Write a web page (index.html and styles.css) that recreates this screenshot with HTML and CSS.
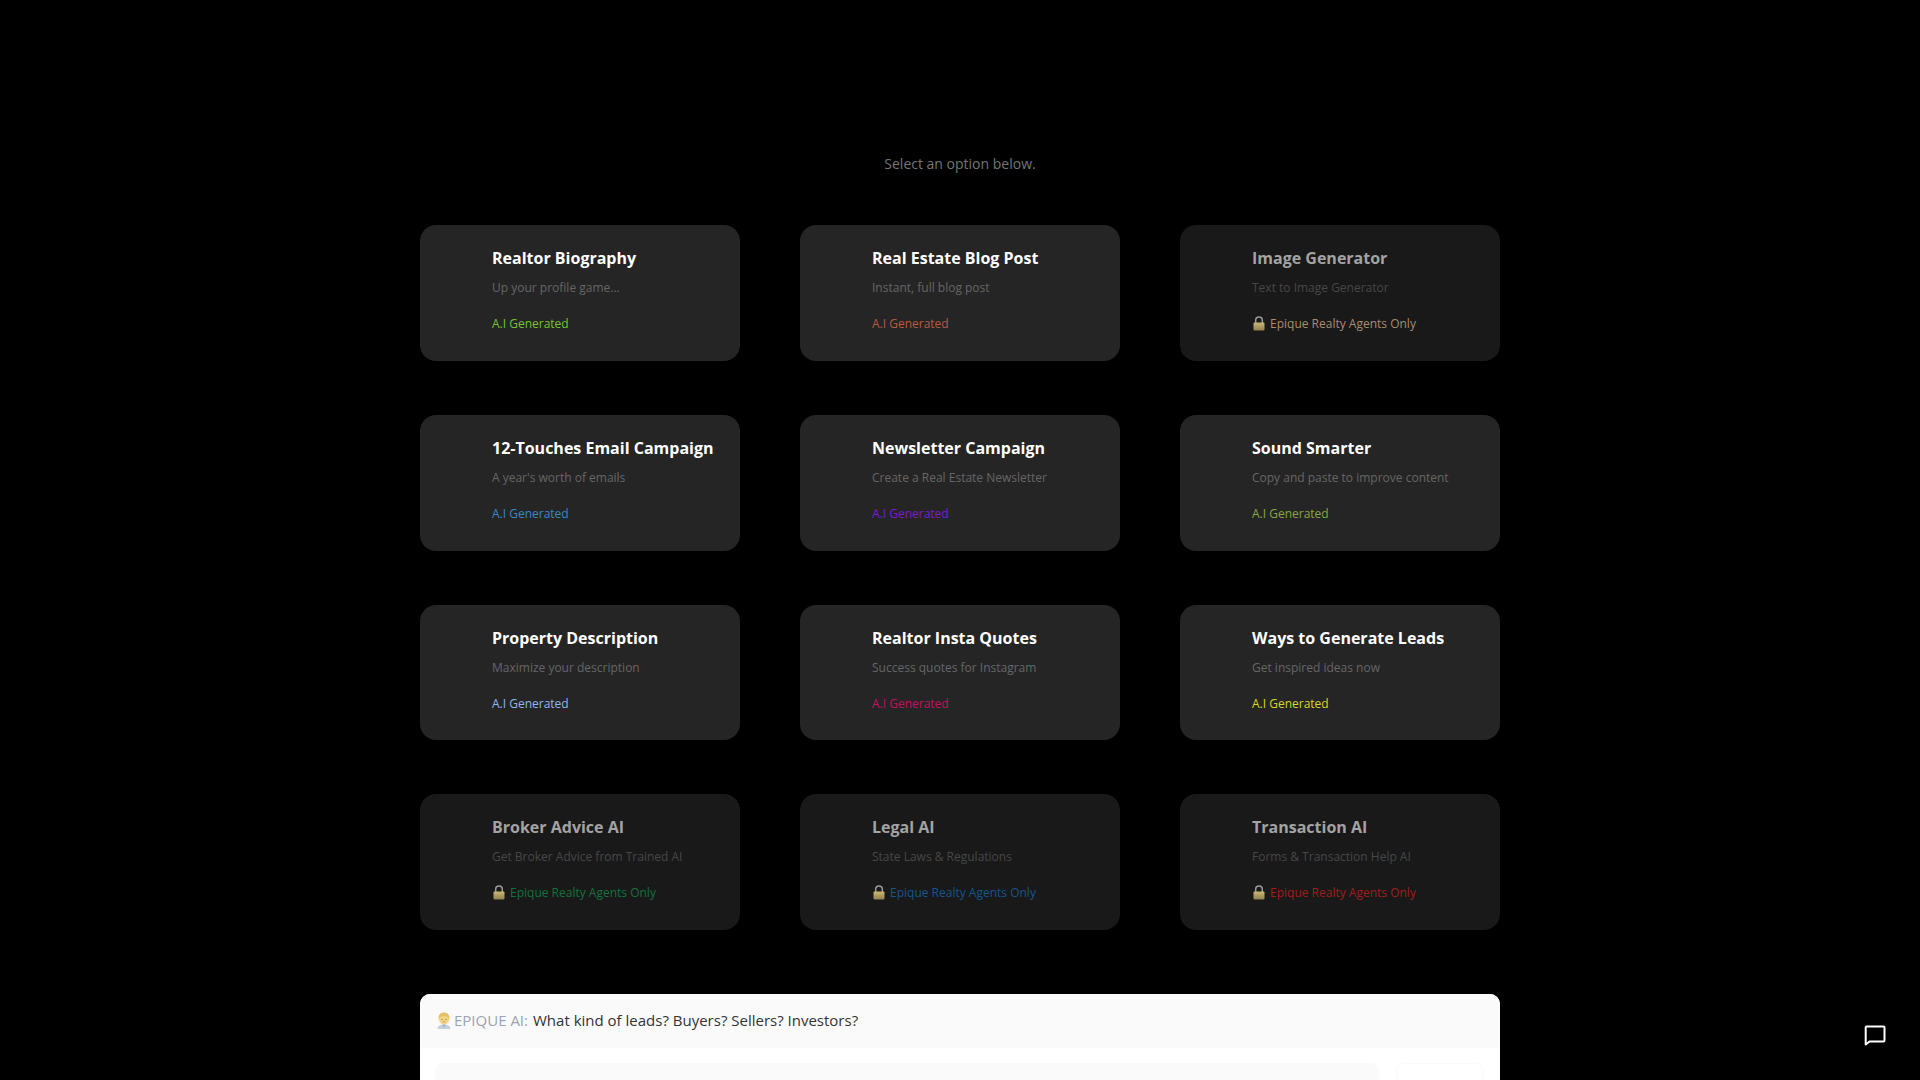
FILE: index.html
```html
<!DOCTYPE html>
<html lang="en">
<head>
<meta charset="utf-8">
<title>Epique AI</title>
<link rel="stylesheet" href="styles.css">
</head>
<body>
<svg class="defs" width="0" height="0" aria-hidden="true">
  <defs>
    <linearGradient id="lockBody" x1="0" y1="0" x2="0" y2="1"><stop offset="0" stop-color="#cdb873"/><stop offset="1" stop-color="#8f8150"/></linearGradient>
    <symbol id="lock" viewBox="0 0 12 15">
      <path d="M2.700 7V4.300a3.300 3.300 0 0 1 6.600 0V7" fill="none" stroke="#9a9a9a" stroke-width="1.500"/>
      <rect x="0.500" y="6.500" width="11" height="8" rx="1" fill="url(#lockBody)"/>
    </symbol>
  </defs>
</svg>
<main class="page">
  <p class="intro">Select an option below.</p>
  <section class="grid">
    <article class="card"><h2>Realtor Biography</h2><p class="desc">Up your profile game...</p><p class="tag c-green">A.I Generated</p></article>
    <article class="card"><h2>Real Estate Blog Post</h2><p class="desc">Instant, full blog post</p><p class="tag c-red">A.I Generated</p></article>
    <article class="card locked"><h2>Image Generator</h2><p class="desc">Text to Image Generator</p><p class="tag c-tan"><svg class="lock"><use href="#lock"/></svg>Epique Realty Agents Only</p></article>
    <article class="card"><h2>12-Touches Email Campaign</h2><p class="desc">A year's worth of emails</p><p class="tag c-blue">A.I Generated</p></article>
    <article class="card"><h2>Newsletter Campaign</h2><p class="desc">Create a Real Estate Newsletter</p><p class="tag c-purple">A.I Generated</p></article>
    <article class="card"><h2>Sound Smarter</h2><p class="desc">Copy and paste to improve content</p><p class="tag c-olive">A.I Generated</p></article>
    <article class="card"><h2>Property Description</h2><p class="desc">Maximize your description</p><p class="tag c-sky">A.I Generated</p></article>
    <article class="card"><h2>Realtor Insta Quotes</h2><p class="desc">Success quotes for Instagram</p><p class="tag c-pink">A.I Generated</p></article>
    <article class="card"><h2>Ways to Generate Leads</h2><p class="desc">Get inspired ideas now</p><p class="tag c-yellow">A.I Generated</p></article>
    <article class="card locked"><h2>Broker Advice AI</h2><p class="desc">Get Broker Advice from Trained AI</p><p class="tag c-dgreen"><svg class="lock"><use href="#lock"/></svg>Epique Realty Agents Only</p></article>
    <article class="card locked"><h2>Legal AI</h2><p class="desc">State Laws &amp; Regulations</p><p class="tag c-dblue"><svg class="lock"><use href="#lock"/></svg>Epique Realty Agents Only</p></article>
    <article class="card locked"><h2>Transaction AI</h2><p class="desc">Forms &amp; Transaction Help AI</p><p class="tag c-dred"><svg class="lock"><use href="#lock"/></svg>Epique Realty Agents Only</p></article>
  </section>
  <section class="panel">
    <header class="panel-head">
      <svg class="avatar" viewBox="0 0 14 17" aria-hidden="true">
        <path d="M0.500 17c0-3 2.500-4.500 6.500-4.500s6.500 1.500 6.500 4.500z" fill="#c4d0dc"/>
        <path d="M5.800 12.500h2.400L7 15.500z" fill="#8fa3b8"/>
        <circle cx="7" cy="7" r="5.400" fill="#f2d587"/>
        <path d="M1.500 7c-.5-4 2-6.500 5.500-6.500S13 3 12.500 7c-.8-1.600-2.500-2.700-5.500-2.700S2.300 5.400 1.500 7z" fill="#e6c069"/>
        <circle cx="5" cy="7.300" r=".6" fill="#8a6d3b"/>
        <circle cx="9" cy="7.300" r=".6" fill="#8a6d3b"/>
        <path d="M5.700 9.800h2.600" stroke="#b98f50" stroke-width=".7" fill="none"/>
      </svg>
      <span class="label">EPIQUE AI:</span>
      <span class="question">What kind of leads? Buyers? Sellers? Investors?</span>
    </header>
    <div class="panel-body">
      <div class="field"></div>
      <div class="send"></div>
    </div>
  </section>
</main>
<svg class="chat" viewBox="0 0 24 24" aria-hidden="true">
  <path d="M3.500 3.500h17a1 1 0 0 1 1 1v13a1 1 0 0 1-1 1H6.500l-3.800 3V4.500a1 1 0 0 1 .8-1z" fill="none" stroke="#fff" stroke-width="2" stroke-linejoin="round"/>
</svg>
</body>
</html>
```

FILE: styles.css
```css
* { box-sizing: border-box; }
html, body { margin: 0; height: 100%; overflow: hidden; background: #000; }
body { font-family: "Open Sans", "Liberation Sans", sans-serif; }
.defs { position: absolute; }
.page { width: 1080px; margin: 0 auto; padding-top: 154px; }
.intro { margin: 0 0 51.3px; height: 20px; font-size: 14px; line-height: 20px; text-align: center; color: #757575; }
.grid { display: grid; grid-template-columns: repeat(3, 320px); column-gap: 60px; row-gap: 54px; }
.card { height: 135.67px; padding: 21px 10px 0 72px; border-radius: 16px; background: #252525; }
.card h2 { margin: 0; font-size: 16px; line-height: 24px; font-weight: 700; color: #fff; white-space: nowrap; }
.desc { margin: 9px 0 0; font-size: 12px; line-height: 18px; color: #666; white-space: nowrap; }
.tag { display: flex; align-items: center; margin: 18px 0 0; font-size: 12px; line-height: 18px; white-space: nowrap; }
.card.locked { background: #191919; }
.card.locked h2 { color: #a3a3a3; }
.card.locked .desc { color: #474747; }
.lock { width: 12px; height: 15px; margin: -1px 5px 0 1px; flex: none; }
.c-green { color: #76c32f; }
.c-red { color: #b85a42; }
.c-tan { color: #a98c6c; }
.c-blue { color: #3a85c9; }
.c-purple { color: #7a1ad1; }
.c-olive { color: #86a83e; }
.c-sky { color: #8db8ee; }
.c-pink { color: #c0145f; }
.c-yellow { color: #d9d91f; }
.c-dgreen { color: #14713f; }
.c-dblue { color: #14558f; }
.c-dred { color: #a11d1d; }
.panel { margin-top: 64px; border-radius: 10px 10px 0 0; background: #fff; overflow: hidden; }
.panel-head { display: flex; align-items: center; height: 54px; padding: 0 16px 2px 17px; background: #fafafa; font-size: 15px; }
.avatar { width: 14px; height: 17px; flex: none; margin-top: 2px; }
.label { margin-left: 3px; color: #9ca3af; }
.question { margin-left: 5px; color: #333; }
.panel-body { display: flex; gap: 17px; padding: 15px 16px 0 15px; }
.field { flex: none; width: 944px; height: 40px; border-radius: 8px; background: #fafafa; }
.send { flex: 1; height: 40px; border-radius: 8px; background: #fff; border: 1px solid #fafafa; }
.chat { position: absolute; left: 1863px; top: 1023px; width: 24px; height: 24px; }
```
